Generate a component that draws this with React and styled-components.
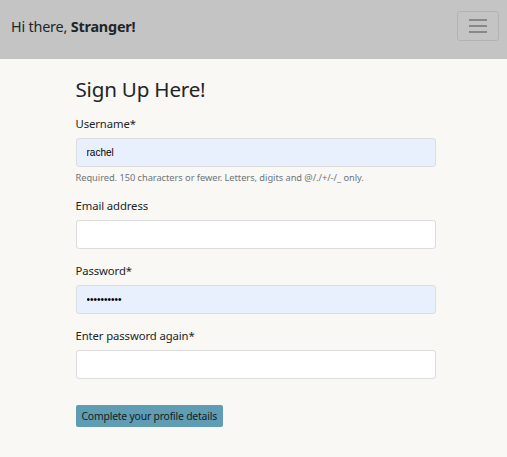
import React from 'react'
import styled, { createGlobalStyle } from 'styled-components'

const GlobalStyle = createGlobalStyle`
	body {
		margin: 0;
		background-color: #f9f8f4;
		font-family: 'Noto Sans', 'Open Sans', sans-serif;
		color: #212529;
	}
`

const Navbar = styled.nav`
	height: 59px;
	background-color: #c4c4c4;
	display: flex;
	align-items: flex-start;
	justify-content: space-between;
	padding: 11px 8px 0 11px;
	box-sizing: border-box;
`

const Greeting = styled.span`
	margin-top: 6px;
	font-size: 14.4px;
	line-height: 20px;
	color: #212529;
	letter-spacing: -0.2px;

	b {
		font-weight: 700;
	}
`

const Toggler = styled.button`
	width: 42px;
	height: 30px;
	border: 1px solid #b2b2b2;
	border-radius: 3px;
	background: transparent;
	display: flex;
	flex-direction: column;
	align-items: center;
	justify-content: center;
	gap: 4px;
	padding: 0;

	span {
		display: block;
		width: 18px;
		height: 2px;
		background-color: #888888;
	}
`

const Main = styled.main`
	width: 360px;
	margin: 0 auto;
	padding: 18px 0 32px 0;
	box-sizing: border-box;
	transform: translateX(2px);
`

const Title = styled.h2`
	margin: 0 0 15px 0;
	font-size: 20.6px;
	line-height: 24px;
	font-weight: 400;
	color: #212529;
	letter-spacing: -0.2px;
`

const Field = styled.div`
	margin-bottom: 14px;
`

const Label = styled.label`
	display: block;
	font-size: 11.3px;
	line-height: 16px;
	color: #212529;
	margin-bottom: 6px;
	letter-spacing: -0.1px;
`

const Input = styled.input`
	display: block;
	width: 100%;
	height: 29px;
	box-sizing: border-box;
	border: 1px solid #dcdcdc;
	border-radius: 3px;
	background-color: ${p => (p.$filled ? '#e8f0fe' : '#ffffff')};
	padding: 0 10px;
	font-family: 'Liberation Sans', Arial, sans-serif;
	font-size: 10px;
	color: #000;
	outline: none;
`

const Help = styled.small`
	display: block;
	margin-top: 5px;
	margin-bottom: 1px;
	font-size: 9.3px;
	line-height: 12px;
	color: #6c757d;
	letter-spacing: -0.05px;
`

const SubmitButton = styled.button`
	margin-top: 12px;
	height: 22px;
	padding: 0 6px;
	border: none;
	border-radius: 2px;
	background-color: #5e9db4;
	color: #1a1a1a;
	font-family: 'Noto Sans', 'Open Sans', sans-serif;
	font-size: 10.4px;
	letter-spacing: -0.2px;
`

export default function App() {
	return (
		<>
			<GlobalStyle />
			<Navbar>
				<Greeting>
					Hi there, <b>Stranger!</b>
				</Greeting>
				<Toggler aria-label='Toggle navigation'>
					<span />
					<span />
					<span />
				</Toggler>
			</Navbar>
			<Main>
				<Title>Sign Up Here!</Title>
				<Field>
					<Label>Username*</Label>
					<Input $filled defaultValue='rachel' />
					<Help>Required. 150 characters or fewer. Letters, digits and @/./+/-/_ only.</Help>
				</Field>
				<Field>
					<Label>Email address</Label>
					<Input type='email' />
				</Field>
				<Field>
					<Label>Password*</Label>
					<Input $filled type='password' defaultValue='abcdefghij' />
				</Field>
				<Field>
					<Label>Enter password again*</Label>
					<Input type='password' />
				</Field>
				<SubmitButton>Complete your profile details</SubmitButton>
			</Main>
		</>
	)
}
